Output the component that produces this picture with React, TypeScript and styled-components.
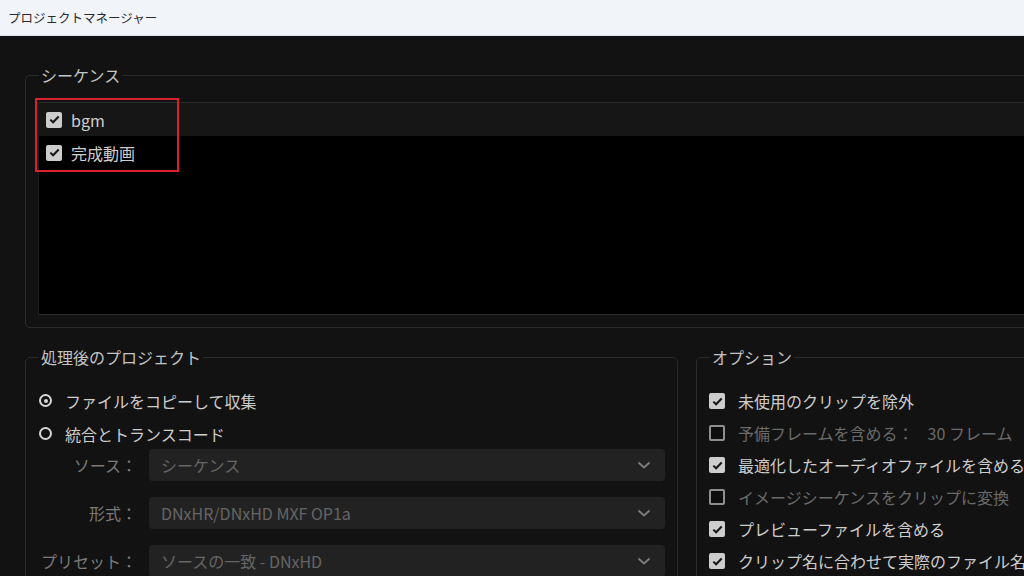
import React from "react";
import styled, { createGlobalStyle } from "styled-components";

const Global = createGlobalStyle`
  html, body { margin: 0; padding: 0; background: #121212; overflow: hidden; }
  body { width: 1024px; height: 576px; font-family: "Noto Sans CJK JP", "Noto Sans", sans-serif; }
  * { box-sizing: border-box; }
`;

const Window = styled.div`
  width: 1024px;
  height: 576px;
  overflow: hidden;
  display: flex;
  flex-direction: column;
  background: #121212;
`;

const TitleBar = styled.div`
  height: 36px;
  flex: none;
  background: #f1f4f9;
  border-bottom: 1px solid #dfe3e8;
  display: flex;
  align-items: center;
  padding-left: 8px;
  font-size: 12.5px;
  color: #2b2b2b;
`;

const Body = styled.div`
  width: 1120px;
  padding: 29px 0 0 25px;
  display: flex;
  flex-direction: column;
  gap: 19px;
`;

const Group = styled.fieldset<{ $w?: string }>`
  margin: 0;
  border: 1px solid #2b2b2b;
  border-radius: 5px;
  padding: 0 12px 12px 12px;
  width: ${(p) => p.$w || "auto"};
  flex: ${(p) => (p.$w ? "none" : "1")};
  min-width: 0;
`;

const Legend = styled.legend`
  font-size: 16px;
  line-height: 20px;
  color: #c4c4c4;
  padding: 0 2px;
  margin-left: 1px;
`;

const ListWrap = styled.div`
  position: relative;
  margin-top: 17px;
`;

const List = styled.div`
  height: 213px;
  background: #000;
  border-top: 1px solid #2a2a2a;
  border-bottom: 1px solid #2a2a2a;
  border-left: 1px solid #1e1e1e;
`;

const ListRow = styled.div<{ $sel?: boolean }>`
  height: 33px;
  display: flex;
  align-items: center;
  gap: 9px;
  padding-left: 7px;
  background: ${(p) => (p.$sel ? "#161616" : "transparent")};
  color: #cfcfcf;
  font-size: 16px;
`;

const Highlight = styled.div`
  position: absolute;
  left: -3px;
  top: -4px;
  width: 144px;
  height: 74px;
  border: 2px solid #d8232f;
`;

const Box = styled.span<{ $on?: boolean }>`
  width: 16px;
  height: 16px;
  flex: none;
  border-radius: 2px;
  display: inline-flex;
  align-items: center;
  justify-content: center;
  background: ${(p) => (p.$on ? "#cdcdcd" : "#0e0e0e")};
  border: ${(p) => (p.$on ? "none" : "2px solid #8f8f8f")};
`;

const Row2 = styled.div`
  display: flex;
  gap: 18px;
`;

const Stack = styled.div`
  display: flex;
  flex-direction: column;
  padding-top: 17px;
`;

const RadioRow = styled.div`
  height: 33px;
  display: flex;
  align-items: center;
  gap: 13px;
  font-size: 16px;
  color: #cdcdcd;
`;

const Radio = styled.span<{ $on?: boolean }>`
  width: 13px;
  height: 13px;
  flex: none;
  border-radius: 50%;
  border: 2.5px solid #d6d6d6;
  margin-left: 1px;
  display: inline-flex;
  align-items: center;
  justify-content: center;
  &::after {
    content: "";
    width: 4px;
    height: 4px;
    border-radius: 50%;
    background: ${(p) => (p.$on ? "#d6d6d6" : "transparent")};
  }
`;

const Fields = styled.div`
  display: flex;
  flex-direction: column;
  gap: 16px;
  margin-top: -1px;
`;

const FieldRow = styled.div`
  display: flex;
  align-items: center;
`;

const FieldLabel = styled.span`
  width: 99px;
  flex: none;
  text-align: right;
  font-size: 16px;
  color: #7a7a7a;
`;

const Select = styled.div`
  margin-left: 12px;
  flex: 1;
  height: 32px;
  border-radius: 4px;
  background: #222222;
  display: flex;
  align-items: center;
  justify-content: space-between;
  padding: 0 14px 0 12px;
  font-size: 16px;
  color: #656565;
`;

const OptRow = styled.div<{ $dim?: boolean }>`
  height: 32px;
  display: flex;
  align-items: center;
  gap: 13px;
  font-size: 16px;
  color: ${(p) => (p.$dim ? "#6a6a6a" : "#cdcdcd")};
  white-space: nowrap;
`;

const Extra = styled.span`
  margin-left: 14px;
`;

const OptStack = styled.div`
  display: flex;
  flex-direction: column;
  padding-top: 18px;
`;

const Check = () => (
  <svg width="11" height="9" viewBox="0 0 11 9">
    <path d="M1.3 4.6 L4.1 7.3 L9.7 1.5" fill="none" stroke="#161616" strokeWidth="2" />
  </svg>
);

const Chevron = () => (
  <svg width="14" height="8" viewBox="0 0 14 8">
    <path d="M1.5 1.5 L7 6.5 L12.5 1.5" fill="none" stroke="#7a7a7a" strokeWidth="2" />
  </svg>
);

const CheckBox = ({ on }: { on?: boolean }) => <Box $on={on}>{on && <Check />}</Box>;

const options: { label: string; extra?: string; on: boolean; dim?: boolean }[] = [
  { label: "未使用のクリップを除外", on: true },
  { label: "予備フレームを含める：", extra: "30 フレーム", on: false, dim: true },
  { label: "最適化したオーディオファイルを含める", on: true },
  { label: "イメージシーケンスをクリップに変換", on: false, dim: true },
  { label: "プレビューファイルを含める", on: true },
  { label: "クリップ名に合わせて実際のファイル名を変更", on: true },
];

const fields = [
  { label: "ソース：", value: "シーケンス" },
  { label: "形式：", value: "DNxHR/DNxHD MXF OP1a" },
  { label: "プリセット：", value: "ソースの一致 - DNxHD" },
];

export default function App() {
  return (
    <Window>
      <Global />
      <TitleBar>プロジェクトマネージャー</TitleBar>
      <Body>
        <Group>
          <Legend>シーケンス</Legend>
          <ListWrap>
            <List>
              <ListRow $sel>
                <CheckBox on />
                bgm
              </ListRow>
              <ListRow>
                <CheckBox on />
                完成動画
              </ListRow>
            </List>
            <Highlight />
          </ListWrap>
        </Group>
        <Row2>
          <Group $w="653px">
            <Legend>処理後のプロジェクト</Legend>
            <Stack>
              <RadioRow>
                <Radio $on />
                ファイルをコピーして収集
              </RadioRow>
              <RadioRow>
                <Radio />
                統合とトランスコード
              </RadioRow>
              <Fields>
                {fields.map((f) => (
                  <FieldRow key={f.label}>
                    <FieldLabel>{f.label}</FieldLabel>
                    <Select>
                      {f.value}
                      <Chevron />
                    </Select>
                  </FieldRow>
                ))}
              </Fields>
            </Stack>
          </Group>
          <Group>
            <Legend>オプション</Legend>
            <OptStack>
              {options.map((o) => (
                <OptRow key={o.label} $dim={o.dim}>
                  <CheckBox on={o.on} />
                  <span>
                    {o.label}
                    {o.extra && <Extra>{o.extra}</Extra>}
                  </span>
                </OptRow>
              ))}
            </OptStack>
          </Group>
        </Row2>
      </Body>
    </Window>
  );
}
